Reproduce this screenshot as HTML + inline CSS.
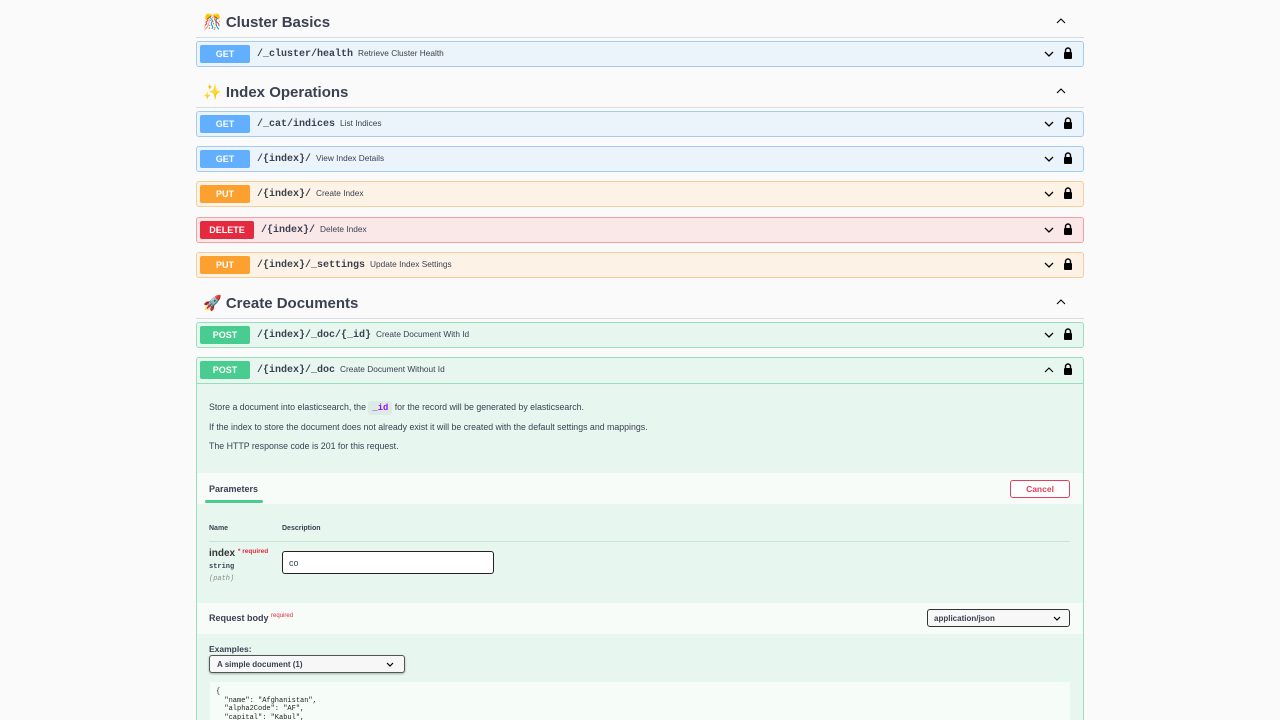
<!DOCTYPE html>
<html><head><meta charset="utf-8"><style>
*{box-sizing:border-box;margin:0;padding:0}
html,body{width:1280px;height:720px;overflow:hidden}
body{background:#fafafa;font-family:"Liberation Sans",sans-serif;color:#3b4151;position:relative}
.a{position:absolute}
.h{position:absolute;left:196px;width:888px;height:36px;border-bottom:1px solid #d8dbe0}
.h span{position:absolute;left:7px;top:11px;font-size:15px;font-weight:bold;color:#3b4151}
.h .car{position:absolute;left:860px;top:16px}
.op{position:absolute;left:196px;width:888px;height:26px;border:1px solid;border-radius:3px}
.get{background:#ebf3fb;border-color:#a4cbf2}
.put{background:#fcf3e6;border-color:#f5cf95}
.del{background:#fae7e7;border-color:#f0a0a3}
.post{background:#e8f6f0;border-color:#98dfbd}
.b{position:absolute;left:3px;top:3px;height:18px;width:50px;border-radius:2px;color:#fff;font-size:9px;font-weight:bold;text-align:center;line-height:18px}
.get .b{background:#61affe}.put .b{background:#fca130}.del .b{background:#e5293f;width:54px}.post .b{background:#49cc90}
.p{position:absolute;left:60px;top:6px;font-family:"Liberation Mono",monospace;font-size:10px;font-weight:bold;color:#3b4151}
.del .p{left:64px}
.d{font-family:"Liberation Sans",sans-serif;font-size:8.3px;font-weight:normal;margin-left:5px;color:#3b4151}
.ic{position:absolute;left:847px;top:9px}
.lk{position:absolute;left:866px;top:5px}
.t{font-size:8.8px;color:#3b4151;position:absolute}
</style></head><body>
<svg width="0" height="0" style="position:absolute"><defs>
<g id="dn"><path d="M1 1 L5 5 L9 1" fill="none" stroke="#000" stroke-width="1.3"/></g>
<g id="up"><path d="M1 5 L5 1 L9 5" fill="none" stroke="#000" stroke-width="1.1"/></g>
<g id="lk"><path d="M2.5 5 V3.5 a2.5 2.5 0 0 1 5 0 V5" fill="none" stroke="#000" stroke-width="1.4"/><rect x="1" y="5" width="8" height="7" rx="1" fill="#000"/></g>
</defs></svg>

<div class="h" style="top:2px"><span>🎊 Cluster Basics</span><svg class="car" width="10" height="7"><use href="#up"/></svg></div>
<div class="op get" style="top:41px"><div class="b">GET</div><div class="p">/_cluster/health<span class="d">Retrieve Cluster Health</span></div><svg class="ic" width="10" height="7"><use href="#dn"/></svg><svg class="lk" width="10" height="13"><use href="#lk"/></svg></div>

<div class="h" style="top:72px"><span>✨ Index Operations</span><svg class="car" width="10" height="7"><use href="#up"/></svg></div>
<div class="op get" style="top:111px"><div class="b">GET</div><div class="p">/_cat/indices<span class="d">List Indices</span></div><svg class="ic" width="10" height="7"><use href="#dn"/></svg><svg class="lk" width="10" height="13"><use href="#lk"/></svg></div>
<div class="op get" style="top:146px"><div class="b">GET</div><div class="p">/{index}/<span class="d">View Index Details</span></div><svg class="ic" width="10" height="7"><use href="#dn"/></svg><svg class="lk" width="10" height="13"><use href="#lk"/></svg></div>
<div class="op put" style="top:181px"><div class="b">PUT</div><div class="p">/{index}/<span class="d">Create Index</span></div><svg class="ic" width="10" height="7"><use href="#dn"/></svg><svg class="lk" width="10" height="13"><use href="#lk"/></svg></div>
<div class="op del" style="top:217px"><div class="b">DELETE</div><div class="p">/{index}/<span class="d">Delete Index</span></div><svg class="ic" width="10" height="7"><use href="#dn"/></svg><svg class="lk" width="10" height="13"><use href="#lk"/></svg></div>
<div class="op put" style="top:252px"><div class="b">PUT</div><div class="p">/{index}/_settings<span class="d">Update Index Settings</span></div><svg class="ic" width="10" height="7"><use href="#dn"/></svg><svg class="lk" width="10" height="13"><use href="#lk"/></svg></div>

<div class="h" style="top:283px"><span>🚀 Create Documents</span><svg class="car" width="10" height="7"><use href="#up"/></svg></div>
<div class="op post" style="top:322px"><div class="b">POST</div><div class="p">/{index}/_doc/{_id}<span class="d">Create Document With Id</span></div><svg class="ic" width="10" height="7"><use href="#dn"/></svg><svg class="lk" width="10" height="13"><use href="#lk"/></svg></div>

<div class="op post" style="top:357px;height:370px">
<div style="position:absolute;left:0;top:25px;width:886px;border-top:1px solid #98dfbd"></div>
<div class="b">POST</div><div class="p">/{index}/_doc<span class="d">Create Document Without Id</span></div><svg class="ic" width="10" height="7" style="top:9px"><use href="#up"/></svg><svg class="lk" width="10" height="13"><use href="#lk"/></svg>
</div>
<div class="t" style="left:209px;top:402px">Store a document into elasticsearch, the <span style="font-family:'Liberation Mono',monospace;font-weight:bold;color:#9012fe;background:#dcebe3;padding:2px 4px;border-radius:3px">_id</span> for the record will be generated by elasticsearch.</div>
<div class="t" style="left:209px;top:422px">If the index to store the document does not already exist it will be created with the default settings and mappings.</div>
<div class="t" style="left:209px;top:441px">The HTTP response code is 201 for this request.</div>

<div class="a" style="left:197px;top:473px;width:886px;height:31px;background:#f7fcf9"></div>
<div class="a" style="left:209px;top:484px;font-size:9px;font-weight:bold">Parameters</div>
<div class="a" style="left:205px;top:500px;width:58px;height:3px;background:#49cc90;border-radius:2px"></div>
<div class="a" style="left:1010px;top:480px;width:60px;height:18px;border:1px solid #e0405a;border-radius:3px;color:#e0405a;font-size:8.5px;font-weight:bold;text-align:center;line-height:16px;background:#fff">Cancel</div>

<div class="a" style="left:209px;top:525px;font-size:7px;font-weight:bold">Name</div>
<div class="a" style="left:282px;top:525px;font-size:7px;font-weight:bold">Description</div>
<div class="a" style="left:209px;top:541px;width:861px;border-top:1px solid #c9e4d4"></div>
<div class="a" style="left:209px;top:548px;font-size:10px;font-weight:bold;color:#333">index <span style="color:#e5293f;font-size:6.5px;vertical-align:top">* required</span></div>
<div class="a" style="left:209px;top:563px;font-size:7px;font-family:'Liberation Mono',monospace;font-weight:bold">string</div>
<div class="a" style="left:209px;top:575px;font-size:7px;font-family:'Liberation Mono',monospace;font-style:italic;color:#888">(path)</div>
<div class="a" style="left:282px;top:551px;width:212px;height:23px;border:1px solid #222;border-radius:3px;background:#fff;font-size:9px;padding:6px 6px">co</div>

<div class="a" style="left:197px;top:603px;width:886px;height:31px;background:#f7fcf9"></div>
<div class="a" style="left:209px;top:613px;font-size:9px;font-weight:bold">Request body <span style="color:#e5293f;font-size:6px;font-weight:normal;vertical-align:top">required</span></div>
<div class="a" style="left:927px;top:609px;width:143px;height:18px;border:1px solid #333;border-radius:3px;background:#f7f7f7;font-size:8px;font-weight:bold;padding:4px 6px">application/json<svg style="position:absolute;right:8px;top:6px" width="8" height="6"><path d="M1 1 L4 4 L7 1" fill="none" stroke="#000" stroke-width="1.2"/></svg></div>

<div class="a" style="left:209px;top:644px;font-size:8.5px;font-weight:bold">Examples:</div>
<div class="a" style="left:209px;top:655px;width:196px;height:18px;border:1px solid #555;border-radius:3px;background:#f7f7f7;font-size:8px;font-weight:bold;padding:4px 7px;box-shadow:0 1px 2px rgba(0,0,0,.3)">A simple document (1)<svg style="position:absolute;right:10px;top:6px" width="8" height="6"><path d="M1 1 L4 4 L7 1" fill="none" stroke="#000" stroke-width="1.2"/></svg></div>

<div class="a" style="left:210px;top:682px;width:860px;height:40px;background:#f6fdf8;font-family:'Liberation Mono',monospace;font-size:7px;line-height:8.5px;padding:6px 6px;white-space:pre;color:#222">{
  "name": "Afghanistan",
  "alpha2Code": "AF",
  "capital": "Kabul",</div>
</body></html>
